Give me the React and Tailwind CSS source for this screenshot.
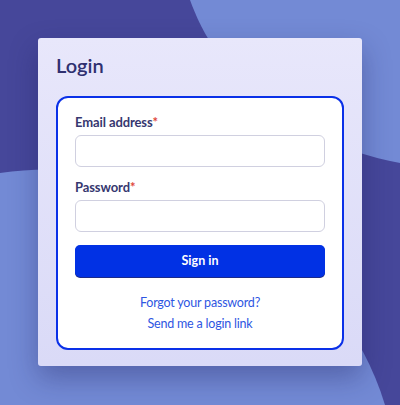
// Login card on a two-tone blob background
function Background() {
  return (
    <svg
      className="absolute inset-0 h-full w-full"
      viewBox="0 0 400 405"
      preserveAspectRatio="none"
    >
      <rect width="400" height="405" fill="#46479a" />
      <path d="M190 0 C215 70 280 140 400 163 L400 0 Z" fill="#738ad5" />
      <path d="M0 173 C150 150 335 240 385 405 L0 405 Z" fill="#738ad5" />
    </svg>
  );
}

function Field({ label, type = "text" }) {
  return (
    <div className="flex flex-col gap-[3px]">
      <label className="text-[13px] leading-5 font-bold tracking-[-0.1px] text-[#36376f]">
        {label}
        <span className="text-[#e0463a]">*</span>
      </label>
      <input
        type={type}
        className="h-8 w-full rounded-md border border-[#d0d0e0] bg-white px-3 text-sm outline-none"
      />
    </div>
  );
}

export default function App() {
  return (
    <div
      className="relative h-[405px] w-[400px] overflow-hidden"
      style={{ fontFamily: "Lato, 'Noto Sans', sans-serif" }}
    >
      <Background />
      <div className="relative px-[38px] pt-[38px]">
        <div className="flex h-[328px] w-[324px] flex-col rounded-[3px] bg-gradient-to-b from-[#e8e7fb] to-[#dadaf7] px-[18px] pt-[15px] pb-[16px] shadow-[0_12px_28px_rgba(25,25,90,0.35)]">
          <h1 className="text-[20px] leading-6 font-semibold text-[#2f3070]">
            Login
          </h1>
          <div className="mt-[19px] flex flex-1 flex-col rounded-[12px] border-2 border-[#0a30e8] bg-white px-[17px] pt-[14px] pb-[15px]">
            <Field label="Email address" type="email" />
            <div className="mt-[10px]">
              <Field label="Password" type="password" />
            </div>
            <button className="mt-[13px] h-8 w-full rounded-[5px] bg-[#0131e4] text-[12.5px] font-bold text-white shadow-[0_1px_0_#1b2a8a]">
              Sign in
            </button>
            <div className="mt-[17px] flex flex-col items-center gap-[3px] text-[12.5px] leading-[18px] tracking-[-0.2px] text-[#2e56e2]">
              <a href="#" className="hover:underline">
                Forgot your password?
              </a>
              <a href="#" className="hover:underline">
                Send me a login link
              </a>
            </div>
          </div>
        </div>
      </div>
    </div>
  );
}
